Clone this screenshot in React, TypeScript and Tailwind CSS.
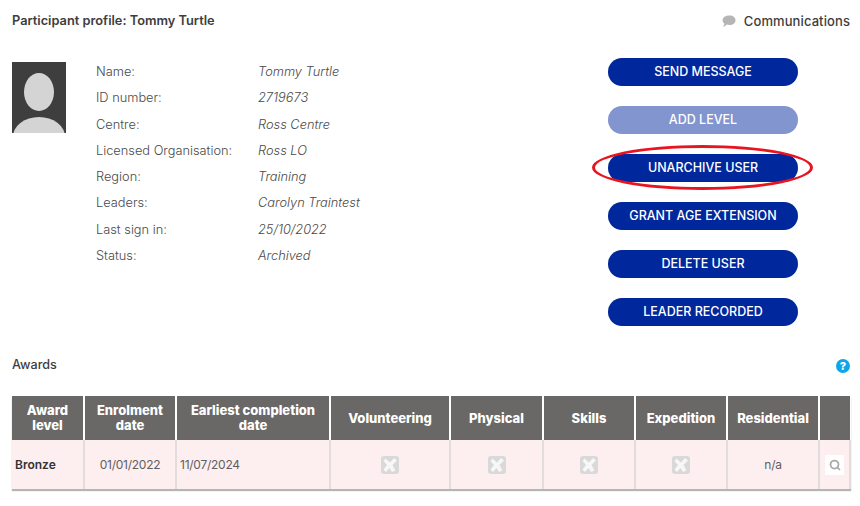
import { Search } from "lucide-react";

const details = [
  ["Name:", "Tommy Turtle"],
  ["ID number:", "2719673"],
  ["Centre:", "Ross Centre"],
  ["Licensed Organisation:", "Ross LO"],
  ["Region:", "Training"],
  ["Leaders:", "Carolyn Traintest"],
  ["Last sign in:", "25/10/2022"],
  ["Status:", "Archived"],
];

const actions = ["SEND MESSAGE", "ADD LEVEL", "UNARCHIVE USER", "GRANT AGE EXTENSION", "DELETE USER", "LEADER RECORDED"];

function CrossBox() {
  return (
    <span className="mx-auto flex h-[18px] w-[18px] items-center justify-center rounded-[3px] bg-[#d9d9d9]">
      <svg viewBox="0 0 18 18" className="h-[18px] w-[18px]">
        <path d="M4.5 2.5 L9 6.5 L13 2 L16 4.5 L11.5 9 L14.5 14.5 L11 16 L8.5 12 L5 16 L2.5 13.5 L6 9 L2.5 5 Z" fill="#f7f7f7" />
      </svg>
    </span>
  );
}

function HeadCell({ children }: { children?: React.ReactNode }) {
  return (
    <th className="h-[44px] border-r-2 border-white bg-[#6a6866] p-0 text-center align-middle text-[13px] leading-[15px] font-extrabold text-white last:border-r-0">
      {children}
    </th>
  );
}

function Cell({ children, className = "" }: { children?: React.ReactNode; className?: string }) {
  return (
    <td className={`h-[49px] border-r-2 border-[#e3dcdd] p-0 align-middle text-[12px] tracking-[-0.25px] text-[#5f5f5f] ${className}`}>
      {children}
    </td>
  );
}

export default function App() {
  return (
    <div className="relative h-[506px] w-[860px] overflow-hidden bg-white pt-[13px] pr-[10px] pl-[12px] font-['Inter','Liberation_Sans',sans-serif] text-[#3d3d3d]">
      <div className="flex items-center justify-between">
        <h1 className="text-[12.8px] leading-[16px] font-semibold">Participant profile: Tommy Turtle</h1>
        <div className="flex items-center gap-[8px] text-[13px] leading-[16px] font-medium tracking-[0.1px]">
          <svg viewBox="0 0 14 13" className="h-[13px] w-[14px]">
            <path d="M7.5 0.5 C11 0.5 13.5 2.5 13.5 5.2 C13.5 8 11 10 7.5 10 C6.5 10 5.6 9.9 4.8 9.6 C3.8 10.8 2.4 11.6 0.8 11.8 C1.8 10.8 2.2 9.8 2.3 8.6 C1.2 7.7 0.6 6.5 0.6 5.2 C0.6 2.5 3.5 0.5 7.5 0.5 Z" fill="#b5b5b5" />
          </svg>
          <span>Communications</span>
        </div>
      </div>

      <div className="mt-[29px] flex h-[268px]">
        <div className="relative mt-[4px] h-[71px] w-[54px] shrink-0 overflow-hidden bg-[#3e3e3e]">
          <div className="absolute top-[11px] left-[12px] h-[38px] w-[30px] rounded-[50%] bg-[#d4d4d4]" />
          <div className="absolute top-[55px] left-[1px] h-[40px] w-[52px] rounded-[50%] bg-[#d4d4d4]" />
        </div>
        <dl className="mt-[1px] ml-[30px] w-[512px] shrink-0 text-[12.8px] leading-[16px] font-light">
          {details.map(([label, value]) => (
            <div key={label} className="flex h-[26.25px] items-center">
              <dt className="w-[162px] text-[#4a4a4a]">{label}</dt>
              <dd className="text-[#4a4a4a] italic">{value}</dd>
            </div>
          ))}
        </dl>
        <div className="flex w-[190px] shrink-0 flex-col gap-[20px]">
          {actions.map((action) => (
            <button
              key={action}
              className={`h-[28px] rounded-[14px] pt-[1px] text-[12.5px] font-medium text-white ${action === "ADD LEVEL" ? "bg-[#8295cf]" : "bg-[#00289c]"}`}
            >
              {action}
            </button>
          ))}
        </div>
      </div>

      <div className="mt-[30px] flex items-center justify-between">
        <h2 className="text-[12.6px] leading-[16px] font-medium">Awards</h2>
        <span className="mt-[3px] flex h-[14px] w-[14px] items-center justify-center rounded-full bg-[#0ea5e9] text-[11px] leading-none font-extrabold text-white">
          ?
        </span>
      </div>

      <table className="mt-[23px] w-[838px] table-fixed border-collapse shadow-[0_2px_1px_#b5b5b5]">
        <colgroup>
          <col className="w-[72px]" />
          <col className="w-[92px]" />
          <col className="w-[154px]" />
          <col className="w-[120px]" />
          <col className="w-[93px]" />
          <col className="w-[92px]" />
          <col className="w-[92px]" />
          <col className="w-[92px]" />
          <col className="w-[31px]" />
        </colgroup>
        <thead>
          <tr>
            <HeadCell>Award level</HeadCell>
            <HeadCell>Enrolment date</HeadCell>
            <HeadCell>Earliest completion date</HeadCell>
            <HeadCell>Volunteering</HeadCell>
            <HeadCell>Physical</HeadCell>
            <HeadCell>Skills</HeadCell>
            <HeadCell>Expedition</HeadCell>
            <HeadCell>Residential</HeadCell>
            <HeadCell />
          </tr>
        </thead>
        <tbody>
          <tr className="bg-[#fdeef0]">
            <Cell className="pl-[3px] text-[11.5px] font-semibold tracking-normal text-[#333333]">Bronze</Cell>
            <Cell className="text-center">01/01/2022</Cell>
            <Cell className="pl-[3px]">11/07/2024</Cell>
            <Cell><CrossBox /></Cell>
            <Cell><CrossBox /></Cell>
            <Cell><CrossBox /></Cell>
            <Cell><CrossBox /></Cell>
            <Cell className="text-center">n/a</Cell>
            <Cell className="border-r-0">
              <span className="mx-auto flex h-[20px] w-[19px] items-center justify-center bg-white">
                <Search className="h-[12px] w-[12px] text-[#a8a8a8]" strokeWidth={3.5} />
              </span>
            </Cell>
          </tr>
        </tbody>
      </table>

      {/* red marker round the unarchive button */}
      <div className="absolute top-[145px] left-[592px] h-[45px] w-[221px] rounded-[50%] border-[3px] border-[#e8141f]" />
    </div>
  );
}
